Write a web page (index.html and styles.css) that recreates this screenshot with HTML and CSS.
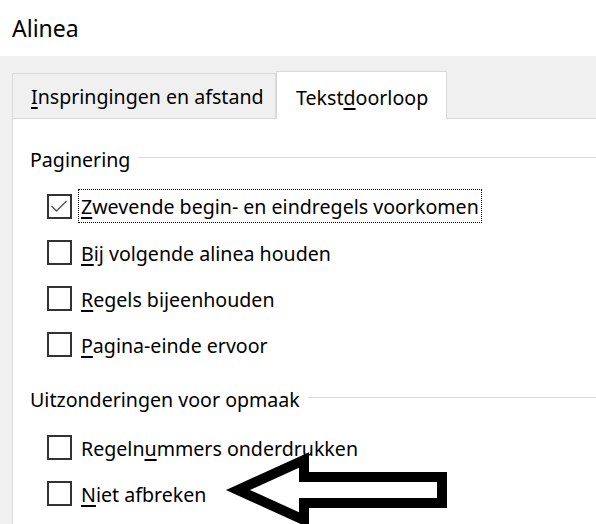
FILE: index.html
```html
<!DOCTYPE html>
<html lang="nl">
  <head>
    <meta charset="UTF-8" />
    <title>Alinea</title>
    <link rel="stylesheet" href="styles.css">
  </head>
  <body>
    <div class="title">Alinea</div>

    <div class="dialog">
      <div class="tabs">
        <div class="tab"><u>I</u>nspringingen en afstand</div>
        <div class="tab active">Tekst<u>d</u>oorloop</div>
      </div>

      <div class="panel">
        <div class="group-title">Paginering</div>
        <div class="option">
          <span class="box checked">
            <svg width="21" height="21" viewBox="0 0 21 21">
              <path d="M2.5 10 L7.5 15 L17.5 5" fill="none" stroke="#555" stroke-width="1.4" />
            </svg>
          </span>
          <span class="label focused"><u>Z</u>wevende begin- en eindregels voorkomen</span>
        </div>
        <div class="option">
          <span class="box"></span>
          <span class="label"><u>B</u>ij volgende alinea houden</span>
        </div>
        <div class="option">
          <span class="box"></span>
          <span class="label"><u>R</u>egels bijeenhouden</span>
        </div>
        <div class="option">
          <span class="box"></span>
          <span class="label"><u>P</u>agina-einde ervoor</span>
        </div>

        <div class="group-title second">Uitzonderingen voor opmaak</div>
        <div class="option first">
          <span class="box"></span>
          <span class="label">Regeln<u>u</u>mmers onderdrukken</span>
        </div>
        <div class="option">
          <span class="box"></span>
          <span class="label"><u>N</u>iet afbreken</span>
        </div>
      </div>
    </div>

    <!-- pointer arrow drawn over the dialog -->
    <svg class="arrow" width="596" height="524" viewBox="0 0 596 524">
      <polygon
        points="238,490 304,460 304,477 442,477 442,503 304,503 304,520"
        fill="#fff"
        stroke="#000"
        stroke-width="10"
        stroke-linejoin="miter"
      />
    </svg>
  </body>
</html>
```

FILE: styles.css
```css
body {
  margin: 0;
  padding: 0;
  font-family: "Noto Sans", "Open Sans", sans-serif;
  color: #000;
  background-color: #f0f0f0;
  width: 596px;
  height: 524px;
  overflow: hidden;
  position: relative;
}

u {
  text-decoration-thickness: 2px;
  text-underline-offset: 3px;
}

.title {
  background-color: #fff;
  height: 56px;
  line-height: 56px;
  padding-left: 12px;
  font-size: 23px;
}

.dialog {
  padding-top: 15px;
}

.tabs {
  display: flex;
  align-items: flex-end;
  margin-left: 12px;
  position: relative;
  z-index: 1;
}

.tab {
  box-sizing: border-box;
  height: 45px;
  line-height: 46px;
  padding-left: 18px;
  width: 264px;
  font-size: 19.6px;
  border: 1px solid #d9d9d9;
  border-bottom: none;
  background-color: #f0f0f0;
}

.tab.active {
  width: 171px;
  height: 48px;
  line-height: 52px;
  padding-left: 19px;
  margin-bottom: -1px;
  background-color: #fff;
}

.panel {
  background-color: #fff;
  margin-left: 12px;
  border-left: 1px solid #d9d9d9;
  border-top: 1px solid #d9d9d9;
  padding: 25px 0 10px 17px;
  font-size: 19.6px;
}

.group-title {
  display: flex;
  align-items: center;
  gap: 8px;
  height: 26px;
  margin-bottom: 11px;
  padding-top: 2px;
}

.group-title::after {
  content: "";
  flex: 1;
  border-top: 1px solid #dadada;
  margin-top: -3px;
}

.group-title.second {
  margin-top: 17px;
  margin-bottom: 12px;
}

.option {
  display: flex;
  align-items: center;
  height: 46px;
  padding-left: 17px;
}

.box {
  box-sizing: border-box;
  flex: none;
  width: 25px;
  height: 25px;
  border: 2px solid #333;
  background-color: #fff;
  display: flex;
  align-items: center;
  justify-content: center;
}

.label {
  margin-left: 9px;
  padding-top: 3px;
  white-space: nowrap;
}

.label.focused {
  outline: 1px dotted #000;
  outline-offset: 0;
  margin-left: 7px;
  padding: 3px 2px 2px 2px;
}

.arrow {
  position: absolute;
  left: 0;
  top: 0;
}
```
